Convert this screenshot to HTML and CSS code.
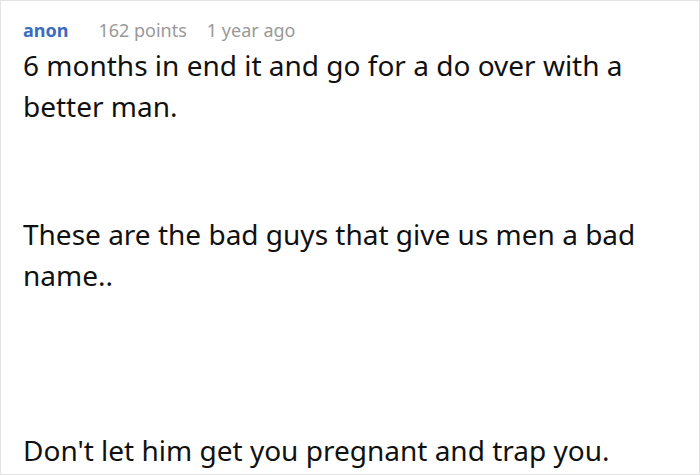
FILE: index.html
```html
<!DOCTYPE html>
<html lang="en">
<head>
<meta charset="utf-8">
<title>Comment</title>
<link rel="stylesheet" href="styles.css">
</head>
<body>
<article class="comment">
  <header class="meta">
    <span class="author">anon</span>
    <span class="points">162 points</span>
    <span class="time">1 year ago</span>
  </header>
  <div class="body">
    <p class="para">6 months in end it and go for a do over with a better man.</p>
    <p class="para gap-lg">These are the bad guys that give us men a bad name..</p>
    <p class="para gap-xl">Don't let him get you pregnant and trap you.</p>
  </div>
</article>
</body>
</html>
```

FILE: styles.css
```css
html, body {
  margin: 0;
  padding: 0;
  background: #ffffff;
}
.comment {
  box-sizing: border-box;
  width: 700px;
  height: 475px;
  border: 1px solid #e3e3e3;
  padding: 15px 22px 0 22px;
  font-family: "Noto Sans", "Open Sans", sans-serif;
  overflow: hidden;
}
.meta {
  display: flex;
  align-items: baseline;
  gap: 20px;
  font-size: 18px;
  line-height: 28px;
}
.author {
  color: #3b6cbf;
  font-weight: 700;
  margin-right: 10px;
}
.points, .time {
  color: #999999;
}
.body {
  margin-top: 1px;
  font-size: 28px;
  line-height: 41px;
  color: #111111;
}
.para {
  margin: 0;
}
.gap-lg {
  margin-top: 87px;
}
.gap-xl {
  margin-top: 134px;
}
```
